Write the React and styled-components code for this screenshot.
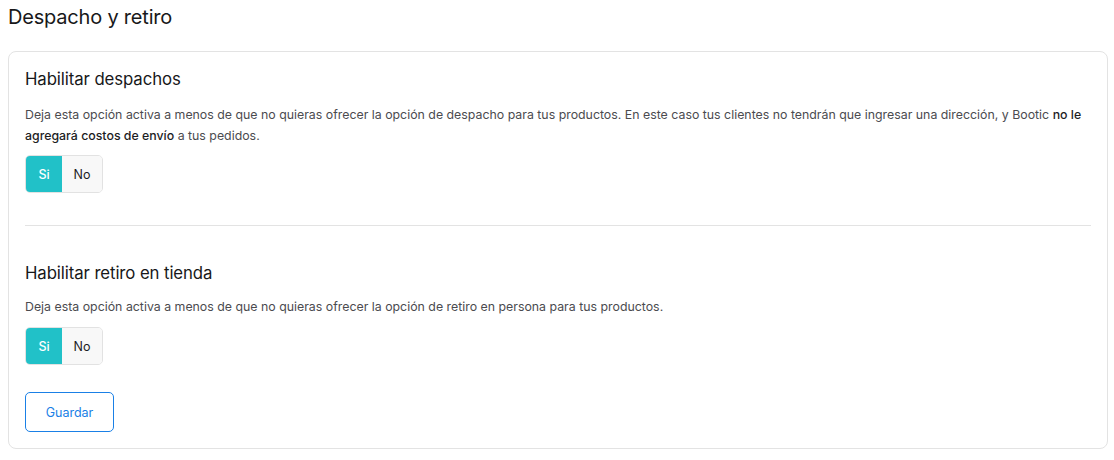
import React, { useState } from "react";
import styled, { createGlobalStyle } from "styled-components";

const Global = createGlobalStyle`
  html, body { margin: 0; padding: 0; background: #ffffff; }
  body { font-family: Inter, "Noto Sans", "Liberation Sans", sans-serif; color: #222; }
  * { box-sizing: border-box; }
`;

const Page = styled.div`
  padding: 3px 6px 10px 8px;
  display: flex;
  flex-direction: column;
  gap: 19px;
`;

const PageTitle = styled.h1`
  margin: 0;
  font-size: 20px;
  line-height: 29px;
  font-weight: 400;
  color: #18181a;
  letter-spacing: -0.2px;
`;

const Card = styled.section`
  border: 1px solid #e3e3e3;
  border-radius: 8px;
  padding: 15px 16px 16px 16px;
  display: flex;
  flex-direction: column;
`;

const Section = styled.div`
  display: flex;
  flex-direction: column;
`;

const SectionTitle = styled.h2`
  margin: 0;
  font-size: 16.8px;
  line-height: 24px;
  font-weight: 400;
  color: #18181a;
  letter-spacing: -0.1px;
`;

const Description = styled.p`
  margin: ${(p) => p.$mt || 13}px 0 0 0;
  font-size: 12.35px;
  line-height: 21px;
  color: #4b4b4f;
`;

const Strong = styled.span`
  color: #1d1d1f;
  font-weight: 500;
`;

const Toggle = styled.div`
  display: inline-flex;
  align-self: flex-start;
  margin-top: ${(p) => p.$mt}px;
  border: 1px solid #e2e2e2;
  border-radius: 5px;
  overflow: hidden;
  height: 38px;
`;

const ToggleOption = styled.button`
  border: none;
  margin: 0;
  padding: 0;
  width: ${(p) => p.$w}px;
  font-family: inherit;
  font-size: 12.5px;
  font-weight: ${(p) => (p.$active ? 500 : 400)};
  background: ${(p) => (p.$active ? "#21c1c8" : "#f8f8f8")};
  color: ${(p) => (p.$active ? "#ffffff" : "#1d1d1f")};
  cursor: pointer;
`;

const Divider = styled.hr`
  border: none;
  border-top: 1px solid #e3e3e3;
  margin: 32px 0 35px 0;
  width: 100%;
`;

const SaveButton = styled.button`
  align-self: flex-start;
  margin-top: 27px;
  width: 89px;
  height: 40px;
  border: 1px solid #1a80e6;
  border-radius: 5px;
  background: #ffffff;
  color: #1a80e6;
  font-family: inherit;
  font-size: 12.5px;
  font-weight: 400;
  cursor: pointer;
`;

function YesNo({ mt }) {
  const [value, setValue] = useState(true);
  return (
    <Toggle $mt={mt}>
      <ToggleOption $w={36} $active={value} onClick={() => setValue(true)}>
        Si
      </ToggleOption>
      <ToggleOption $w={40} $active={!value} onClick={() => setValue(false)}>
        No
      </ToggleOption>
    </Toggle>
  );
}

export default function App() {
  return (
    <>
      <Global />
      <Page>
        <PageTitle>Despacho y retiro</PageTitle>
        <Card>
          <Section>
            <SectionTitle>Habilitar despachos</SectionTitle>
            <Description>
              Deja esta opción activa a menos de que no quieras ofrecer la opción de despacho para tus
              productos. En este caso tus clientes no tendrán que ingresar una dirección, y Bootic{" "}
              <Strong>no le agregará costos de envío</Strong> a tus pedidos.
            </Description>
            <YesNo mt={9} />
          </Section>
          <Divider />
          <Section>
            <SectionTitle>Habilitar retiro en tienda</SectionTitle>
            <Description $mt={11}>
              Deja esta opción activa a menos de que no quieras ofrecer la opción de retiro en persona
              para tus productos.
            </Description>
            <YesNo mt={10} />
          </Section>
          <SaveButton>Guardar</SaveButton>
        </Card>
      </Page>
    </>
  );
}
